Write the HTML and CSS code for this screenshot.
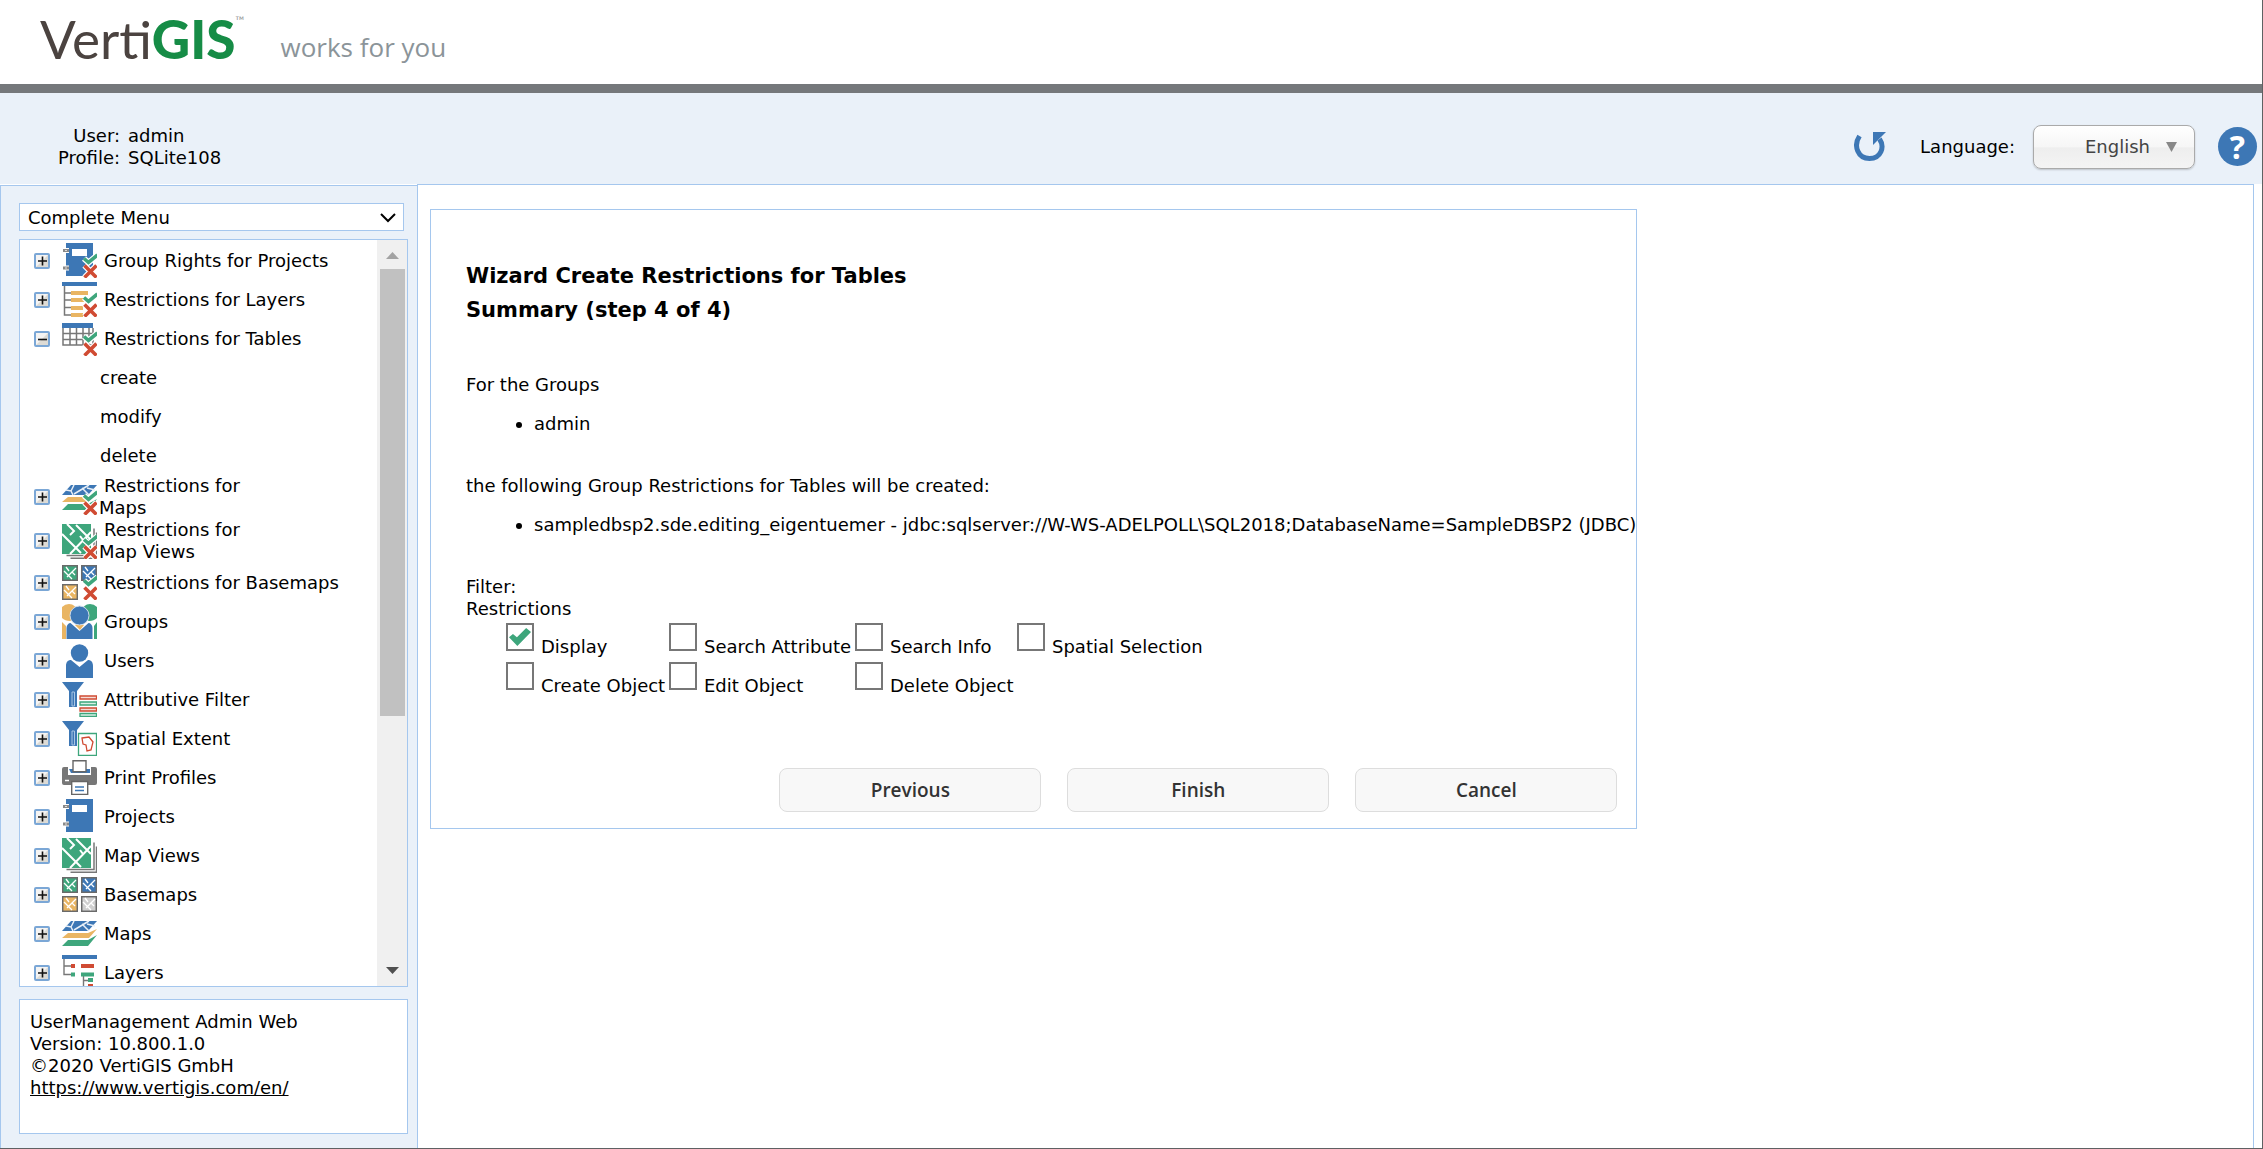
FILE: index.html
```html
<!DOCTYPE html>
<html lang="en">
<head>
<meta charset="utf-8">
<title>UserManagement Admin Web</title>
<link rel="stylesheet" href="styles.css">
</head>
<body>
<svg class="sprite" aria-hidden="true">
  <symbol id="i-plus" viewBox="0 0 16 16"><rect x="1" y="1" width="14" height="14" rx="1" fill="#dddbd5" stroke="#7ba7d6" stroke-width="2"/><path d="M2 2h12L2 14z" fill="#fff" opacity=".7"/><path d="M4 8h9M8.500 3.500v9" stroke="#111" stroke-width="1.600"/></symbol>
  <symbol id="i-minus" viewBox="0 0 16 16"><rect x="1" y="1" width="14" height="14" rx="1" fill="#dddbd5" stroke="#7ba7d6" stroke-width="2"/><path d="M2 2h12L2 14z" fill="#fff" opacity=".7"/><path d="M4 8.500h9" stroke="#111" stroke-width="1.600"/></symbol>
  <symbol id="i-limit" viewBox="0 0 35 35"><path d="M22 15.500l4.500 4L35.500 12M22.500 22.500l12 12M34.500 22.500l-12 12" fill="none" stroke="#fff" stroke-width="6"/><path d="M22 15.500l4.500 4L35.500 12" fill="none" stroke="#3ea67c" stroke-width="3.600"/><path d="M22.500 22.500l12 12M34.500 22.500l-12 12" stroke="#d04b33" stroke-width="3.600"/></symbol>
  <symbol id="i-book" viewBox="0 0 35 35"><path d="M4 0h27v33H4z" fill="#3d77b5"/><path d="M10 6h15v7H10z" fill="#fff"/><path d="M1 7.500h6M1 25h6" stroke="#fff" stroke-width="5"/><path d="M1 7.500h6M1 25h6" stroke="#8a8a8a" stroke-width="3"/><path d="M3 7.500h2M3 25h2" stroke="#ddd"/></symbol>
  <symbol id="i-list" viewBox="0 0 35 35"><path d="M0 0h35v4H0z" fill="#3d77b5"/><path d="M2.500 4v29H9M3 11h6M3 18h6M3 25.500h6" fill="none" stroke="#777" stroke-width="1.500"/><path d="M9 9h17v4H9zM9 16h13v4H9zM9 24h12v4H9zM9 31h12v4H9z" fill="#e9b563"/></symbol>
  <symbol id="i-table" viewBox="0 0 35 35"><path d="M0 2h31v5H0z" fill="#3d77b5"/><path d="M1 7v17h30V7M1 12.500h30M1 18.500h30M8 7v17M14.500 7v17M21 7v17M27 7v17" fill="none" stroke="#777" stroke-width="1.500"/></symbol>
  <symbol id="i-maps" viewBox="0 0 35 35"><path d="M9 5h26L26 15H0z" fill="#3d77b5"/><path d="M4 10l5 1 3-6M9 11l2 4M12 14L27 5M20 8l7 7M25 8l4 1 4 1" fill="none" stroke="#e8eff7" stroke-width="1.500"/><path d="M6 17h20l9-4-8 9H0z" fill="#e9b563"/><path d="M6 24h20l9-5-9 11H0z" fill="#3ea67c"/></symbol>
  <symbol id="i-views" viewBox="0 0 35 35"><path d="M4.500 31.500H32V4.500M8.500 34.300h26V8.500" fill="none" stroke="#777" stroke-width="1.500"/><path d="M0 0h29v30H0z" fill="#3ea67c"/><path d="M0 10l19 19M29 8L8 30M5 0l7 7-4 4M14 1l15 15M18 12l3 4" fill="none" stroke="#fff" stroke-width="2"/></symbol>
  <symbol id="i-tile" viewBox="0 0 16 16"><rect x=".7" y=".7" width="14.600" height="14.600" fill="currentColor" stroke="#6a6a6a" stroke-width="1.500"/><path d="M2 6l8 8M14 3L5 12M4 2l3 4M10 7l3 3" fill="none" stroke="#fff" stroke-width="1.300"/></symbol>
  <symbol id="i-base" viewBox="0 0 35 35"><use href="#i-tile" width="16" height="16" color="#3ea67c"/><use href="#i-tile" x="19" width="16" height="16" color="#3d77b5"/><use href="#i-tile" y="19" width="16" height="16" color="#e9b563"/><use href="#i-tile" x="19" y="19" width="16" height="16" color="#cfcfcf"/></symbol>
  <symbol id="i-user" viewBox="0 0 35 35"><circle cx="17.500" cy="10" r="8.700" fill="#3d77b5"/><path d="M4 35V23c0-4 2-6 5-6l8.500 7 8.500-7c3 0 5 2 5 6v12z" fill="#3d77b5"/></symbol>
  <symbol id="i-groups" viewBox="0 0 35 35"><path d="M0 3Q3 0 7 0q7 0 8 8 0 7-7 9Q3 17 0 14zM0 18l4 4v13H0z" fill="#e9b563"/><path d="M35 3Q32 0 28 0q-7 0-8 8 0 7 7 9 5 0 8-3zM35 18l-3 4v13h3z" fill="#3ea67c"/><path d="M13 21h9l-4 5z" fill="#e9b563"/><circle cx="17.500" cy="11.500" r="9.500" fill="#3d77b5" stroke="#cddbe9"/><path d="M4.500 35V24c0-3 2-5 4-5l9 8 9-8c2 0 4 2 4 5v11z" fill="#3d77b5"/></symbol>
  <symbol id="i-funnel" viewBox="0 0 35 35"><path d="M0 0h22l-7 9v16H7V9z" fill="#3d77b5"/><path d="M10 10h2.500v14H10z" fill="none" stroke="#a9c6e4"/></symbol>
  <symbol id="i-attr" viewBox="0 0 35 35"><use href="#i-funnel"/><path d="M18 14h16.500v3H18zM18 26h16.500v3H18z" fill="#f6dcd7" stroke="#d04b33" stroke-width="1.300"/><path d="M18 20h16.500v3H18zM18 31.500h16.500v3H18z" fill="#d9efe6" stroke="#3ea67c" stroke-width="1.300"/></symbol>
  <symbol id="i-extent" viewBox="0 0 35 35"><use href="#i-funnel"/><path d="M16.500 12.500h18v22h-18z" fill="#fff" stroke="#3ea67c" stroke-width="1.300"/><path d="M20 17l7-1 4 5-2 8-4 1-1-6-3-1z" fill="none" stroke="#d04b33" stroke-width="1.300"/></symbol>
  <symbol id="i-print" viewBox="0 0 35 35"><path d="M0 9q0-2 2-2h4v8h23V7h4q2 0 2 2v14q0 2-2 2H2q-2 0-2-2z" fill="#777"/><path d="M7 9h21v4H9z" fill="#3d77b5"/><path d="M11 .7h13v11H11zM9.700 21.500h16v13h-16z" fill="#fff" stroke="#666" stroke-width="1.400"/><path d="M13 27h9M13 30.500h9" stroke="#3d77b5" stroke-width="1.500"/><path d="M3 20.500h4" stroke="#fff" stroke-width="1.500"/></symbol>
  <symbol id="i-layers" viewBox="0 0 35 35"><path d="M0 0h35v4H0z" fill="#3d77b5"/><path d="M2 4v15.500h7M2 11h7M21.500 21v12M21.500 25.500H26" fill="none" stroke="#777" stroke-width="1.400"/><path d="M9 9h4v4H9zM19 9h13v4H19zM26 29h5v5h-5z" fill="#d04b33"/><path d="M9 17.500h4v4H9zM19 17.500h13v4H19zM26 23h5v4h-5z" fill="#3ea67c"/></symbol>
</svg>
<div class="page">
  <header class="brand">
    <div class="logo"><span class="logo-verti">Verti</span><span class="logo-gis">GIS</span><span class="logo-tm">™</span></div>
    <div class="claim">works for you</div>
  </header>
  <div class="topbar">
    <dl class="session">
      <dt>User:</dt><dd>admin</dd>
      <dt>Profile:</dt><dd>SQLite108</dd>
    </dl>
    <div class="tools">
      <button class="icon-button refresh" type="button" aria-label="Refresh"><svg width="32" height="32" viewBox="0 0 32 32"><path d="M5.500 5C-1 15 4 27.500 15.500 27.500S31 16 25.500 8" fill="none" stroke="#3d77b5" stroke-width="5"/><path d="M19 1h13L19 14z" fill="#3d77b5"/></svg></button>
      <label for="language">Language:</label>
      <div class="language"><select id="language"><option>English</option></select><svg class="triangle" width="11" height="10" viewBox="0 0 11 10" aria-hidden="true"><path d="M0 0h11L5.500 10z" fill="#888"/></svg></div>
      <button class="icon-button help" type="button" aria-label="Help">?</button>
    </div>
  </div>
  <div class="columns">
    <aside class="sidebar">
      <div class="menu-select"><select aria-label="Menu"><option>Complete Menu</option></select><svg class="chevron" width="16" height="10" viewBox="0 0 16 10" aria-hidden="true"><path d="M1 1l7 7 7-7" fill="none" stroke="#000" stroke-width="2"/></svg></div>
      <nav class="tree">
        <ul class="tree-list">
          <li><svg class="toggle"><use href="#i-plus"/></svg><svg class="icon"><use href="#i-book"/><use href="#i-limit"/></svg><span>Group Rights for Projects</span></li>
          <li><svg class="toggle"><use href="#i-plus"/></svg><svg class="icon"><use href="#i-list"/><use href="#i-limit"/></svg><span>Restrictions for Layers</span></li>
          <li><svg class="toggle"><use href="#i-minus"/></svg><svg class="icon"><use href="#i-table"/><use href="#i-limit"/></svg><span>Restrictions for Tables</span></li>
          <li class="leaf">create</li>
          <li class="leaf">modify</li>
          <li class="leaf">delete</li>
          <li><svg class="toggle"><use href="#i-plus"/></svg><svg class="icon"><use href="#i-maps"/><use href="#i-limit"/></svg><span>Restrictions for<br>Maps</span></li>
          <li><svg class="toggle"><use href="#i-plus"/></svg><svg class="icon"><use href="#i-views"/><use href="#i-limit"/></svg><span>Restrictions for<br>Map Views</span></li>
          <li><svg class="toggle"><use href="#i-plus"/></svg><svg class="icon"><use href="#i-base"/><path d="M18 17h17v18H18z" fill="#fff"/><use href="#i-limit"/></svg><span>Restrictions for Basemaps</span></li>
          <li><svg class="toggle"><use href="#i-plus"/></svg><svg class="icon"><use href="#i-groups"/></svg><span>Groups</span></li>
          <li><svg class="toggle"><use href="#i-plus"/></svg><svg class="icon"><use href="#i-user"/></svg><span>Users</span></li>
          <li><svg class="toggle"><use href="#i-plus"/></svg><svg class="icon"><use href="#i-attr"/></svg><span>Attributive Filter</span></li>
          <li><svg class="toggle"><use href="#i-plus"/></svg><svg class="icon"><use href="#i-extent"/></svg><span>Spatial Extent</span></li>
          <li><svg class="toggle"><use href="#i-plus"/></svg><svg class="icon"><use href="#i-print"/></svg><span>Print Profiles</span></li>
          <li><svg class="toggle"><use href="#i-plus"/></svg><svg class="icon"><use href="#i-book"/></svg><span>Projects</span></li>
          <li><svg class="toggle"><use href="#i-plus"/></svg><svg class="icon"><use href="#i-views"/></svg><span>Map Views</span></li>
          <li><svg class="toggle"><use href="#i-plus"/></svg><svg class="icon"><use href="#i-base"/></svg><span>Basemaps</span></li>
          <li><svg class="toggle"><use href="#i-plus"/></svg><svg class="icon"><use href="#i-maps"/></svg><span>Maps</span></li>
          <li><svg class="toggle"><use href="#i-plus"/></svg><svg class="icon"><use href="#i-layers"/></svg><span>Layers</span></li>
        </ul>
        <div class="scrollbar" aria-hidden="true">
          <svg width="13" height="7" viewBox="0 0 13 7"><path d="M0 7L6.500 0 13 7z" fill="#a3a3a3"/></svg>
          <div class="track"><div class="thumb"></div></div>
          <svg width="13" height="7" viewBox="0 0 13 7"><path d="M0 0h13L6.500 7z" fill="#505050"/></svg>
        </div>
      </nav>
      <footer class="about">
        <div>UserManagement Admin Web</div>
        <div>Version: 10.800.1.0</div>
        <div>©2020 VertiGIS GmbH</div>
        <a href="https://www.vertigis.com/en/">https://www.vertigis.com/en/</a>
      </footer>
    </aside>
    <main class="content">
      <form class="wizard">
        <h1>Wizard Create Restrictions for Tables<br>Summary (step 4 of 4)</h1>
        <p>For the Groups</p>
        <ul class="summary"><li>admin</li></ul>
        <p>the following Group Restrictions for Tables will be created:</p>
        <ul class="summary"><li>sampledbsp2.sde.editing_eigentuemer - jdbc:sqlserver://W-WS-ADELPOLL\SQL2018;DatabaseName=SampleDBSP2 (JDBC)</li></ul>
        <p>Filter:<br>Restrictions</p>
        <div class="checks">
          <label><input type="checkbox" checked><span>Display</span></label>
          <label><input type="checkbox"><span>Search Attribute</span></label>
          <label><input type="checkbox"><span>Search Info</span></label>
          <label><input type="checkbox"><span>Spatial Selection</span></label>
          <label><input type="checkbox"><span>Create Object</span></label>
          <label><input type="checkbox"><span>Edit Object</span></label>
          <label><input type="checkbox"><span>Delete Object</span></label>
        </div>
        <div class="actions">
          <button type="button">Previous</button>
          <button type="button">Finish</button>
          <button type="button">Cancel</button>
        </div>
      </form>
    </main>
  </div>
</div>
</body>
</html>
```
FILE: styles.css
```css
* { box-sizing: border-box; }

body {
  margin: 0;
  background: #fff;
  color: #000;
  font: 18px/22px Verdana, "DejaVu Sans", sans-serif;
}

.sprite { position: absolute; width: 0; height: 0; }

.page {
  display: flex;
  flex-direction: column;
  min-height: 100vh;
  border-right: 1px solid #5f6163;
  border-bottom: 1px solid #5f6163;
}

/* Brand header */
.brand {
  display: flex;
  gap: 36px;
  height: 93px;
  padding: 7px 40px 0;
  border-bottom: 9px solid #75787b;
}
.logo {
  display: flex;
  align-items: baseline;
  font: 53px/64px Lato, sans-serif;
  color: #4b4340;
}
.logo-gis { color: #168c46; font-weight: 900; }
.logo-tm { align-self: flex-start; font-size: 12px; line-height: 28px; color: #999; }
.claim { padding-top: 25px; font: 26px/30px "Open Sans", sans-serif; color: #8b9499; }

/* User and language bar */
.topbar {
  display: flex;
  justify-content: space-between;
  height: 91px;
  padding-left: 58px;
  background: #eaf1f9;
}
.session {
  display: grid;
  grid-template-columns: auto auto;
  column-gap: 8px;
  align-content: start;
  margin: 0;
  padding-top: 32px;
}
.session dt { text-align: right; }
.session dd { margin: 0; }
.tools {
  display: flex;
  align-items: center;
  padding: 16px 5px 0 0;
}
.icon-button { border: 0; padding: 0; background: none; }
.refresh { height: 32px; margin-right: 34px; }
.refresh svg { display: block; }
.language { position: relative; margin: 0 23px 0 18px; }
.language select {
  width: 162px;
  height: 44px;
  padding-left: 51px;
  appearance: none;
  border: 1px solid #aaa;
  border-radius: 8px;
  background: linear-gradient(#fff 0, #f6f6f6 50%, #eee 52%, #f4f4f4 100%);
  box-shadow: 0 1px 2px rgb(0 0 0 / 20%);
  color: #444;
  font: inherit;
}
.triangle { position: absolute; right: 18px; top: 17px; }
.help {
  width: 39px;
  height: 39px;
  border-radius: 50%;
  background: #3d77b5;
  color: #fff;
  font: bold 32px/39px "Open Sans", sans-serif;
}

/* Sidebar */
.columns { display: flex; flex: 1; }
.sidebar {
  display: flex;
  flex-direction: column;
  width: 417px;
  margin-top: 1px;
  padding: 17px 9px 14px 18px;
  border: 1px solid #a5c7ee;
  border-width: 1px 0 0 1px;
  background: #eaf1f9;
}
.menu-select { position: relative; width: 385px; margin-bottom: 8px; }
.menu-select select {
  display: block;
  width: 100%;
  height: 28px;
  padding: 1px 8px 0;
  appearance: none;
  border: 1px solid #a5c7ee;
  border-radius: 0;
  background: #fff;
  color: #000;
  font: inherit;
}
.chevron { position: absolute; right: 8px; top: 10px; }
.tree {
  display: flex;
  height: 748px;
  border: 1px solid #a5c7ee;
  background: #fff;
}
.tree-list {
  flex: 1;
  margin: 0;
  padding: 1px 0 0 14px;
  overflow: hidden;
  list-style: none;
}
.tree-list li {
  display: flex;
  align-items: center;
  min-height: 39px;
  white-space: nowrap;
}
.toggle { width: 16px; height: 16px; margin-right: 12px; }
.icon { width: 35px; height: 35px; margin-right: 2px; }
.tree-list span { text-indent: 5px; }
.tree-list .leaf { padding-left: 66px; }
.scrollbar {
  display: flex;
  flex-direction: column;
  align-items: center;
  width: 30px;
  padding: 12px 0;
  background: #f0f0f0;
}
.track { flex: 1; width: 25px; margin: 10px 0; }
.thumb { height: 65%; background: #c1c1c1; }
.about {
  flex: 1;
  margin-top: 12px;
  padding: 11px 10px;
  border: 1px solid #a5c7ee;
  background: #fff;
}
.about a { color: inherit; }

/* Wizard */
.content {
  flex: 1;
  margin-right: 8px;
  padding: 24px 12px;
  border: 1px solid #a5c7ee;
  border-bottom: 0;
}
.wizard {
  width: fit-content;
  min-height: 620px;
  padding: 49px 0 15px 35px;
  border: 1px solid #a5c7ee;
}
.wizard h1 { margin: 0 0 47px; font-size: 21px; line-height: 34px; }
.wizard p { margin: 0 0 17px; }
.summary { margin: 0 0 40px; padding-left: 68px; }
.checks {
  display: grid;
  grid-template-columns: 163px 186px 162px auto;
  justify-content: start;
  grid-auto-rows: 39px;
  margin: -14px 0 67px;
  padding-left: 40px;
}
.checks label { display: flex; gap: 7px; }
.checks span { padding-top: 13px; }
.checks input {
  width: 28px;
  height: 28px;
  margin: 0;
  appearance: none;
  border: 2px solid #777;
  background: #fff;
}
.checks input:checked::before {
  content: "";
  display: block;
  width: 22px;
  height: 18px;
  margin: 3px 1px;
  background: #3ea67c;
  clip-path: polygon(0 52%, 18% 34%, 36% 52%, 78% 0, 100% 22%, 38% 100%);
}
.actions { display: flex; justify-content: flex-end; gap: 26px; padding-right: 19px; }
.actions button {
  width: 262px;
  height: 44px;
  border: 1px solid #ddd;
  border-radius: 8px;
  background: #f8f8f8;
  color: #333;
  font: 600 19px/22px "Open Sans", sans-serif;
}
```
